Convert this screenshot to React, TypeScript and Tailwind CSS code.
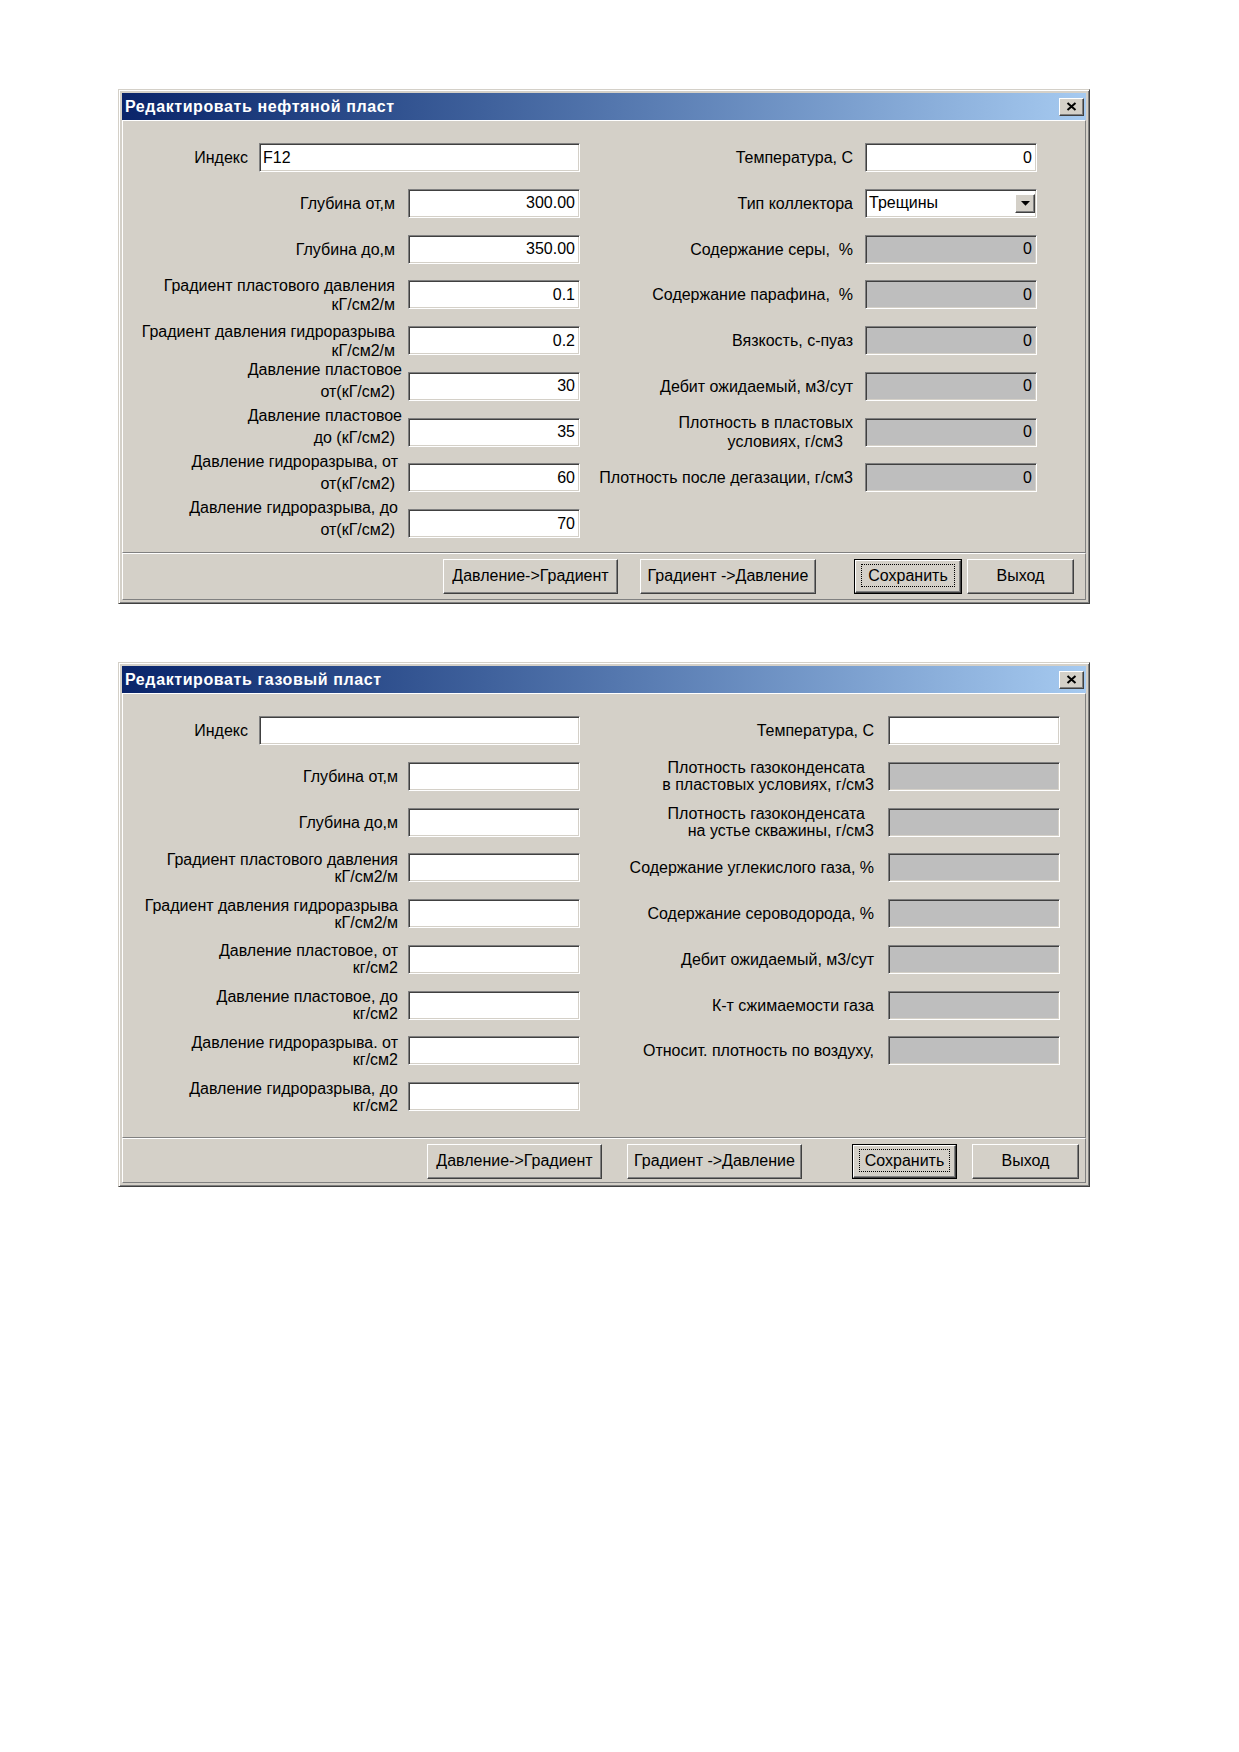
import clsx from 'clsx';

// a label line is either plain text or [text, extra class for that line]
type Line = string | [string, string];

type Field = {
  label: Line[];
  value?: string;
  disabled?: boolean;
  combo?: boolean;
  wide?: boolean;
  lift?: boolean;
  leftAlign?: boolean;
};

type Btn = {
  text: string;
  cls: string;
  isDefault?: boolean;
};

type DialogProps = {
  title: string;
  left: Field[];
  right: Field[];
  leftGapCls: string;
  rightColCls: string;
  rightGapCls: string;
  leadingCls: string;
  formCls: string;
  footerCls: string;
  buttons: Btn[];
};

const oilLeft: Field[] = [
  { label: ['Индекс'], value: 'F12', wide: true, leftAlign: true },
  { label: ['Глубина от,м'], value: '300.00' },
  { label: ['Глубина до,м'], value: '350.00' },
  { label: ['Градиент пластового давления', 'кГ/см2/м'], value: '0.1' },
  { label: ['Градиент давления гидроразрыва', 'кГ/см2/м'], value: '0.2' },
  { label: [['Давление пластовое', '-mr-[7px]'], 'от(кГ/см2)'], value: '30', lift: true },
  { label: [['Давление пластовое', '-mr-[7px]'], 'до (кГ/см2)'], value: '35', lift: true },
  { label: [['Давление гидроразрыва, от', '-mr-[3px]'], 'от(кГ/см2)'], value: '60', lift: true },
  { label: [['Давление гидроразрыва, до', '-mr-[3px]'], 'от(кГ/см2)'], value: '70', lift: true },
];

const oilRight: Field[] = [
  { label: ['Температура, С'], value: '0' },
  { label: ['Тип коллектора'], value: 'Трещины', combo: true },
  { label: ['Содержание серы,  %'], value: '0', disabled: true },
  { label: ['Содержание парафина,  %'], value: '0', disabled: true },
  { label: ['Вязкость, с-пуаз'], value: '0', disabled: true },
  { label: ['Дебит ожидаемый, м3/сут'], value: '0', disabled: true },
  { label: ['Плотность в пластовых', ['условиях, г/см3', 'mr-[10px]']], value: '0', disabled: true },
  { label: ['Плотность после дегазации, г/см3'], value: '0', disabled: true },
];

const gasLeft: Field[] = [
  { label: ['Индекс'], wide: true },
  { label: ['Глубина от,м'] },
  { label: ['Глубина до,м'] },
  { label: ['Градиент пластового давления', 'кГ/см2/м'] },
  { label: ['Градиент давления гидроразрыва', 'кГ/см2/м'] },
  { label: ['Давление пластовое, от', 'кг/см2'] },
  { label: ['Давление пластовое, до', 'кг/см2'] },
  { label: ['Давление гидроразрыва. от', 'кг/см2'] },
  { label: ['Давление гидроразрыва, до', 'кг/см2'] },
];

const gasRight: Field[] = [
  { label: ['Температура, С'] },
  { label: [['Плотность газоконденсата', 'mr-[9px]'], 'в пластовых условиях, г/см3'], disabled: true },
  { label: [['Плотность газоконденсата', 'mr-[9px]'], 'на устье скважины, г/см3'], disabled: true },
  { label: ['Содержание углекислого газа, %'], disabled: true },
  { label: ['Содержание сероводорода, %'], disabled: true },
  { label: ['Дебит ожидаемый, м3/сут'], disabled: true },
  { label: ['К-т сжимаемости газа'], disabled: true },
  { label: ['Относит. плотность по воздуху,'], disabled: true },
];

function TextBox({ f }: { f: Field }) {
  return (
    <div
      className={clsx(
        'flex h-[29px] shrink-0 items-center border border-t-[#808080] border-l-[#808080] border-b-white border-r-white shadow-[inset_1px_1px_0_#404040,inset_-1px_-1px_0_#d4d0c8]',
        f.wide ? 'w-[321px]' : 'w-[172px]',
        f.disabled ? 'bg-[#bebebe]' : 'bg-white'
      )}
    >
      {f.combo ? (
        <>
          <span className="pl-[3px]">{f.value}</span>
          <span className="ml-auto mr-[1px] flex h-[19px] w-[20px] items-center justify-center border border-t-white border-l-white border-b-[#404040] border-r-[#404040] bg-[#d4d0c8] shadow-[inset_-1px_-1px_0_#808080]">
            <svg width="9" height="5" viewBox="0 0 9 5">
              <path d="M0 0h9L4.5 4.8z" fill="#000" />
            </svg>
          </span>
        </>
      ) : (
        <span className={clsx('w-full', f.leftAlign ? 'pl-[3px] text-left' : 'pr-[4px] text-right')}>
          {f.value}
        </span>
      )}
    </div>
  );
}

function Row({ f, gapCls, leadingCls }: { f: Field; gapCls: string; leadingCls: string }) {
  return (
    <div className="flex h-[29px] items-center justify-end">
      <div
        className={clsx(
          'whitespace-pre text-right',
          f.lift ? 'leading-[22px] -translate-y-[5px]' : leadingCls,
          f.wide ? 'mr-[11px]' : gapCls
        )}
      >
        {f.label.map((line) => {
          const [text, cls] = typeof line === 'string' ? [line, ''] : line;
          return (
            <div key={text} className={cls}>
              {text}
            </div>
          );
        })}
      </div>
      <TextBox f={f} />
    </div>
  );
}

function Button({ b }: { b: Btn }) {
  const bevel =
    'flex h-full w-full items-center justify-center border border-t-white border-l-white border-b-[#404040] border-r-[#404040] bg-[#d4d0c8] shadow-[inset_-1px_-1px_0_#808080]';
  return (
    <div className={clsx('h-[35px] shrink-0', b.cls, b.isDefault && 'border border-black')}>
      <div className={clsx(bevel, 'relative')}>
        {b.isDefault && (
          <span className="absolute inset-x-[5px] top-[3px] bottom-[5px] border border-dotted border-black" />
        )}
        <span className="pb-[1px]">{b.text}</span>
      </div>
    </div>
  );
}

function Dialog(p: DialogProps) {
  return (
    <div className="w-[972px] border border-t-[#d4d0c8] border-l-[#d4d0c8] border-b-[#404040] border-r-[#404040] bg-[#d4d0c8] p-[3px] shadow-[inset_1px_1px_0_#fff,inset_-1px_-1px_0_#808080]">
      {/* caption */}
      <div className="flex h-[27px] items-center bg-gradient-to-r from-[#0a246a] to-[#a6caf0] pl-[3px] pr-[2px]">
        <span className="text-[16px] font-bold tracking-[0.6px] text-white">{p.title}</span>
        <span className="ml-auto flex h-[18px] w-[25px] items-center justify-center border border-t-white border-l-white border-b-[#404040] border-r-[#404040] bg-[#d4d0c8] shadow-[inset_-1px_-1px_0_#808080]">
          <svg width="11" height="9" viewBox="0 0 11 9">
            <path d="M1.5 1l8 7M9.5 1l-8 7" stroke="#000" strokeWidth="2" />
          </svg>
        </span>
      </div>

      {/* form panel */}
      <div className={clsx('flex border border-t-white border-l-white border-b-[#808080] border-r-[#808080]', p.formCls)}>
        <div className="flex w-[457px] flex-col gap-[16.75px]">
          {p.left.map((f, i) => (
            <Row key={i} f={f} gapCls={p.leftGapCls} leadingCls={p.leadingCls} />
          ))}
        </div>
        <div className={clsx('flex flex-col gap-[16.75px]', p.rightColCls)}>
          {p.right.map((f, i) => (
            <Row key={i} f={f} gapCls={p.rightGapCls} leadingCls={p.leadingCls} />
          ))}
        </div>
      </div>

      {/* button bar */}
      <div className={clsx('flex border border-t-white border-l-white border-b-[#808080] border-r-[#808080]', p.footerCls)}>
        {p.buttons.map((b) => (
          <Button key={b.text} b={b} />
        ))}
      </div>
    </div>
  );
}

export default function App() {
  return (
    <div className="min-h-[1752px] w-full bg-white pl-[118px] pt-[89px] font-['Liberation_Sans',Arial,sans-serif] text-[16px] text-black">
      <Dialog
        title="Редактировать нефтяной пласт"
        left={oilLeft}
        right={oilRight}
        leftGapCls="mr-[13px]"
        rightColCls="w-[457px]"
        rightGapCls="mr-[12px]"
        leadingCls="leading-[19px]"
        formCls="pt-[22px] pb-[14px]"
        footerCls="pt-[5px] pb-[5px]"
        buttons={[
          { text: 'Давление->Градиент', cls: 'ml-[320px] w-[175px]' },
          { text: 'Градиент ->Давление', cls: 'ml-[22px] w-[176px]' },
          { text: 'Сохранить', cls: 'ml-[38px] w-[108px]', isDefault: true },
          { text: 'Выход', cls: 'ml-[5px] w-[107px]' },
        ]}
      />
      <div className="h-[58px]" />
      <Dialog
        title="Редактировать газовый пласт"
        left={gasLeft}
        right={gasRight}
        leftGapCls="mr-[10px]"
        rightColCls="w-[480px]"
        rightGapCls="mr-[14px]"
        leadingCls="leading-[17px]"
        formCls="pt-[22px] pb-[26px]"
        footerCls="pt-[5px] pb-[3px]"
        buttons={[
          { text: 'Давление->Градиент', cls: 'ml-[304px] w-[175px]' },
          { text: 'Градиент ->Давление', cls: 'ml-[25px] w-[175px]' },
          { text: 'Сохранить', cls: 'ml-[50px] w-[105px]', isDefault: true },
          { text: 'Выход', cls: 'ml-[15px] w-[107px]' },
        ]}
      />
    </div>
  );
}
